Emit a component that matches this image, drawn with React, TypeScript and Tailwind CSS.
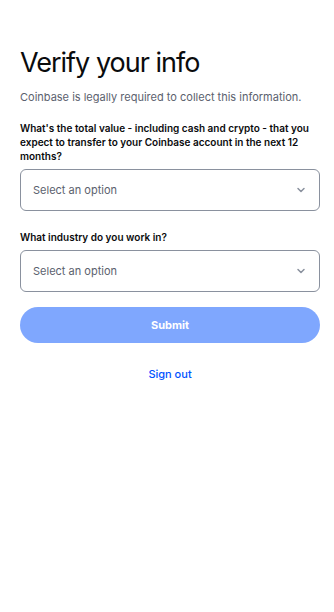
import { ChevronDown } from 'lucide-react'

function SelectField({ label }: { label: string }) {
  return (
    <div className="flex flex-col">
      <label className="text-[10px] font-semibold leading-[14px] text-[#0a0b0d] mb-[6px]">{label}</label>
      <button className="flex items-center justify-between h-[42px] px-3 border border-[#8a919e] rounded-[6px] bg-white text-left">
        <span className="text-[11px] text-[#5b616e]">Select an option</span>
        <ChevronDown className="w-3 h-3 text-[#8a919e]" strokeWidth={3} />
      </button>
    </div>
  )
}

export default function App() {
  return (
    <div className="min-h-screen bg-white font-['Inter',sans-serif] text-[#0a0b0d]">
      <div className="pl-5 pr-[14px] pt-[46px] flex flex-col">
        <h1 className="text-[27px] leading-[34px] font-normal tracking-[-1px]">Verify your info</h1>
        <p className="mt-[9px] text-[11px] leading-[16px] text-[#5b616e]">
          Coinbase is legally required to collect this information.
        </p>

        <div className="mt-[16px] flex flex-col gap-[19px]">
          <SelectField label="What's the total value - including cash and crypto - that you expect to transfer to your Coinbase account in the next 12 months?" />
          <SelectField label="What industry do you work in?" />
        </div>

        <button className="mt-[15px] h-[36px] rounded-full bg-[#7fa7fe] text-white text-[11px] font-bold">
          Submit
        </button>

        <button className="mt-[23px] self-center text-[11px] font-medium text-[#0052ff]">Sign out</button>
      </div>
    </div>
  )
}
